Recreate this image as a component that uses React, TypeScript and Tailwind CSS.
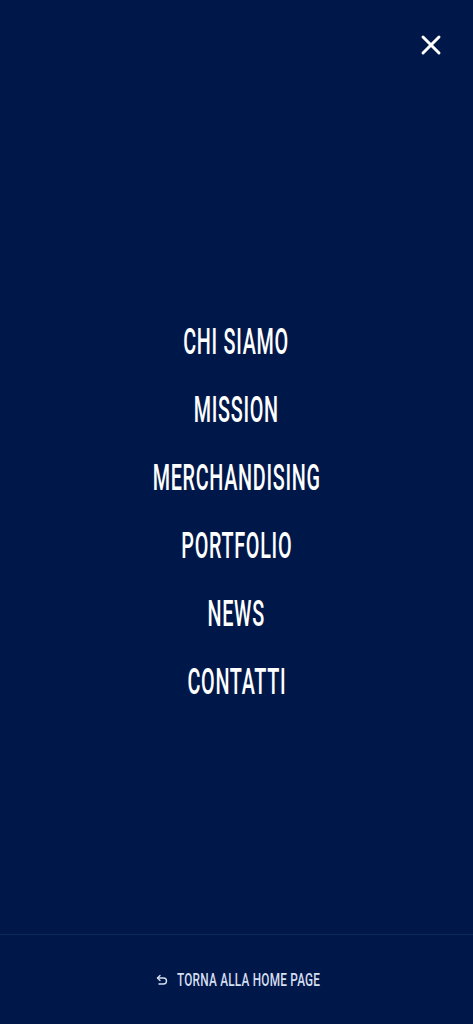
import { X } from "lucide-react";

const links = ["CHI SIAMO", "MISSION", "MERCHANDISING", "PORTFOLIO", "NEWS", "CONTATTI"];

export default function App() {
  return (
    <div className="relative flex flex-col h-[1024px] w-full bg-[#001849] text-white font-['Roboto',sans-serif]">
      <button
        type="button"
        aria-label="Chiudi"
        className="absolute top-[29px] right-[26px] grid place-items-center h-8 w-8 text-white"
      >
        <X size={32} strokeWidth={2.2} />
      </button>

      <nav className="flex-1 flex flex-col items-center justify-center pt-[90px]">
        <ul className="flex flex-col items-center gap-[28px]">
          {links.map((l) => (
            <li key={l} className="h-[40px] flex items-center">
              <a href="#" className="inline-block text-[36px] leading-none font-medium tracking-[0.035em] scale-x-[0.55]">
                {l}
              </a>
            </li>
          ))}
        </ul>
      </nav>

      <div className="h-[90px] border-t border-[#0b2a5c] flex items-center justify-center">
        <a href="#" className="flex items-center gap-[9px] text-[#d6def0]">
          <svg width="12" height="12" viewBox="0 0 12 12" fill="none" stroke="currentColor" strokeWidth="1.4" strokeLinecap="round" strokeLinejoin="round">
            <path d="M4 1.5 1.5 4 4 6.5" />
            <path d="M1.5 4h6a3 3 0 0 1 0 6H3" />
          </svg>
          <span className="inline-block text-[19px] leading-none font-medium tracking-[0.02em] scale-x-[0.62] origin-left -mr-[91px]">
            TORNA ALLA HOME PAGE
          </span>
        </a>
      </div>
    </div>
  );
}
